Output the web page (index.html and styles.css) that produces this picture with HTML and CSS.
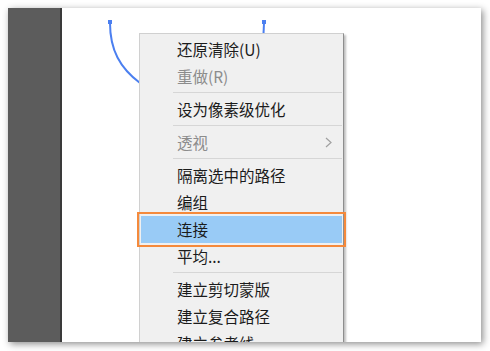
FILE: index.html
```html
<!DOCTYPE html>
<html lang="zh-CN">
<head>
  <meta charset="UTF-8" />
  <meta name="viewport" content="width=device-width, initial-scale=1.0"/>
  <title>右键菜单</title>
  <link rel="stylesheet" href="styles.css">
</head>
<body>
  <div class="window">
    <div class="toolbar"></div>
    <div class="divider"></div>
    <div class="canvas">
      <svg class="path-layer" width="420" height="334" viewBox="0 0 420 334">
        <path d="M48 15 C48 42, 58 60, 78 75" fill="none" stroke="#4b7ff0" stroke-width="2"/>
        <rect x="46" y="12" width="4" height="4" fill="#4b7ff0"/>
        <path d="M202 15 L201.5 26" fill="none" stroke="#4b7ff0" stroke-width="2"/>
        <rect x="200" y="12" width="4" height="4" fill="#4b7ff0"/>
      </svg>

      <div class="menu">
        <div class="menu-item">还原清除(U)</div>
        <div class="menu-item disabled">重做(R)</div>
        <div class="menu-sep"></div>
        <div class="menu-item">设为像素级优化</div>
        <div class="menu-sep"></div>
        <div class="menu-item disabled">
          透视
          <svg class="submenu-arrow" width="7" height="11" viewBox="0 0 7 11">
            <path d="M1 1 L6 5.5 L1 10" fill="none" stroke="#a0a0a0" stroke-width="1.2"/>
          </svg>
        </div>
        <div class="menu-sep"></div>
        <div class="menu-item">隔离选中的路径</div>
        <div class="menu-item">编组</div>
        <div class="menu-item active">连接</div>
        <div class="menu-item">平均...</div>
        <div class="menu-sep"></div>
        <div class="menu-item">建立剪切蒙版</div>
        <div class="menu-item">建立复合路径</div>
        <div class="menu-item">建立参考线</div>
      </div>
    </div>
  </div>
</body>
</html>
```

FILE: styles.css
```css
:root {
  --panel-color: #5c5c5c;
  --menu-bg: #f0f0f0;
  --text-color: #1b1b1b;
  --muted-text: #8c8c8c;
  --sep-color: #d6d6d6;
  --hover-color: #99cbf6;
  --mark-color: #f58a3c;
}

body {
  margin: 0;
  background-color: #ffffff;
  font-family: 'Noto Sans CJK SC', 'Noto Sans', sans-serif;
}

.window {
  display: flex;
  height: 334px;
  margin: 8px 9px 9px 8px;
  background-color: #ffffff;
  box-shadow: 2px 2px 7px rgba(0, 0, 0, 0.45);
  overflow: hidden;
}

.toolbar {
  width: 52px;
  background-color: var(--panel-color);
}

.divider {
  width: 2px;
  background-color: #3a3a3a;
}

.canvas {
  position: relative;
  flex-grow: 1;
  background-color: #ffffff;
}

.path-layer {
  position: absolute;
  top: 0;
  left: 0;
}

/* Context menu */
.menu {
  position: absolute;
  top: 25px;
  left: 77px;
  width: 203px;
  padding: 2px 0;
  background-color: var(--menu-bg);
  border-top: 1px solid #d0d0d0;
  border-left: 1px solid #d0d0d0;
  border-right: 1px solid #8e8e8e;
  box-shadow: 2px 2px 2px rgba(0, 0, 0, 0.25);
}

.menu-item {
  display: flex;
  align-items: center;
  height: 27px;
  margin: 0 1px;
  padding-left: 36px;
  padding-right: 10px;
  font-size: 15.5px;
  line-height: 27px;
  color: var(--text-color);
  white-space: nowrap;
}

.menu-item.disabled {
  color: var(--muted-text);
}

.menu-item.active {
  background-color: var(--hover-color);
  outline: 2px solid var(--mark-color);
  outline-offset: 2px;
}

.submenu-arrow {
  margin-left: auto;
}

.menu-sep {
  height: 1px;
  margin: 2px 1px 3px 33px;
  background-color: var(--sep-color);
}
```
